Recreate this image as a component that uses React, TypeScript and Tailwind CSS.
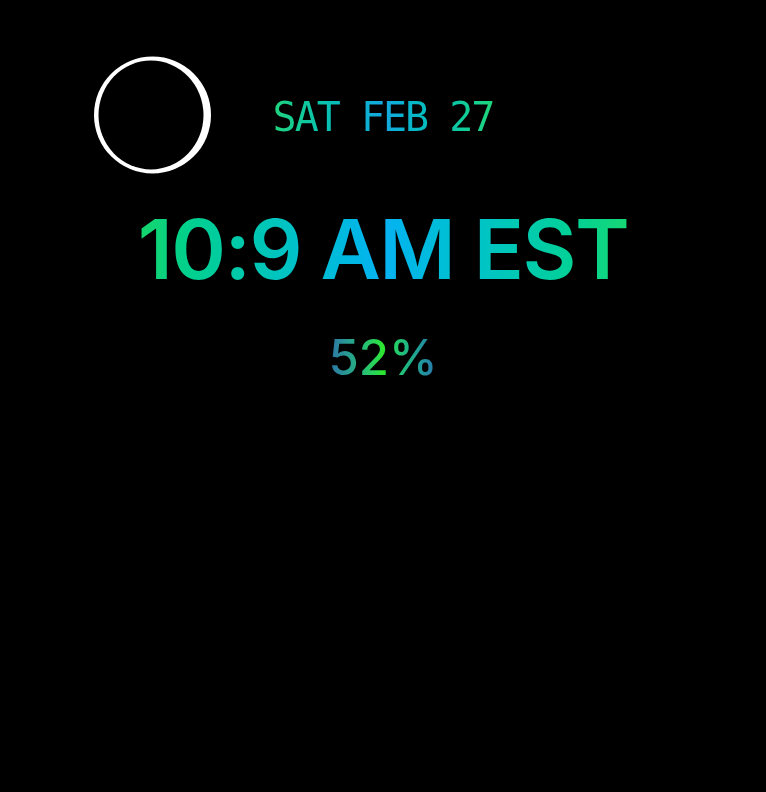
function Moon() {
  return (
    <svg width="120" height="122" viewBox="0 0 120 122" className="block">
      <circle cx="59.5" cy="61" r="58.5" fill="#fff" />
      <ellipse cx="58" cy="61" rx="52.5" ry="54.5" fill="#000" />
    </svg>
  );
}

export default function App() {
  return (
    <div className="h-[792px] w-[766px] overflow-hidden bg-black">
      <div className="grid grid-cols-[1fr_auto_1fr] items-center pt-[54px]">
        <div className="pl-[93px]">
          <Moon />
        </div>
        <div
          className="bg-gradient-to-r from-[#20d47c] via-[#14a8e0] to-[#1fd67a] bg-clip-text pt-[4px] text-[40px] leading-none tracking-[-2px] text-transparent"
          style={{ fontFamily: '"DejaVu Sans Mono", monospace', fontWeight: 200 }}
        >
          SAT FEB 27
        </div>
        <div />
      </div>

      <div className="mt-[32px] flex justify-center">
        <div
          className="bg-gradient-to-r from-[#16d66a] via-[#0ab2f2] to-[#17d873] bg-clip-text text-[83px] font-semibold leading-none tracking-[-1.5px] text-transparent"
          style={{ fontFamily: 'Inter, "Noto Sans", sans-serif' }}
        >
          10:9 AM EST
        </div>
      </div>

      <div className="mt-[42px] flex justify-center">
        <div
          className="bg-gradient-to-r from-[#2f6fa8] via-[#2de62a] to-[#2a73b0] bg-clip-text text-[49px] font-medium leading-none text-transparent"
          style={{ fontFamily: 'Inter, "Noto Sans", sans-serif' }}
        >
          52%
        </div>
      </div>
    </div>
  );
}
